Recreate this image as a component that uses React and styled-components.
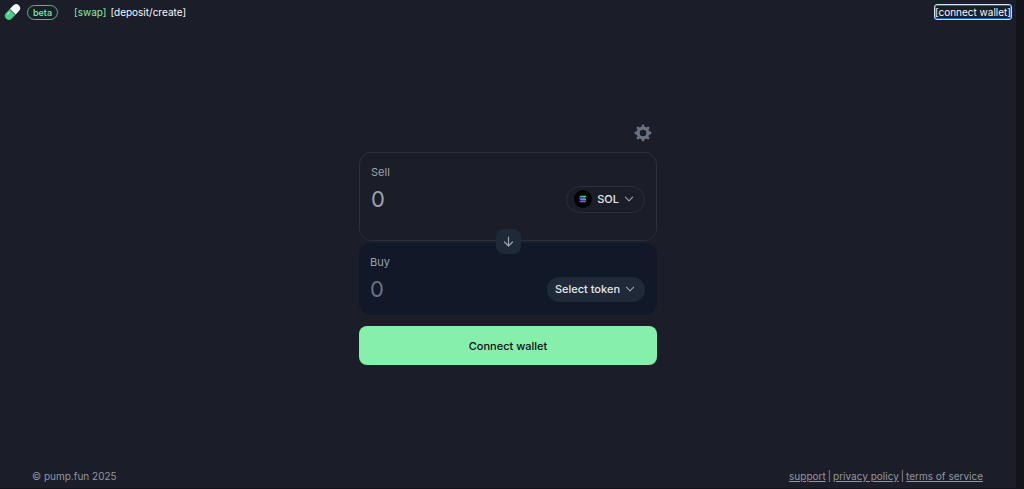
import React from "react";
import styled, { createGlobalStyle } from "styled-components";

const GlobalStyle = createGlobalStyle`
  *, *::before, *::after { box-sizing: border-box; }
  body {
    margin: 0;
    background: #1b1d28;
    color: #fff;
    font-family: Inter, "Liberation Sans", sans-serif;
    font-size: 11px;
    line-height: 16px;
  }
  button, input { font: inherit; color: inherit; }
  button { cursor: pointer; border: 0; padding: 0; background: none; }
`;

const Page = styled.div`
  min-height: 100vh;
  display: flex;
  flex-direction: column;
  border-right: 8px solid #13131a;
  border-bottom: 1px solid #13131a;
`;

const Header = styled.header`
  display: flex;
  align-items: center;
  justify-content: space-between;
  height: 24px;
  padding: 0 4px;
  font-size: 10px;
`;

const Brand = styled.div`
  display: flex;
  align-items: center;
  gap: 6px;
`;

const Badge = styled.span`
  height: 15px;
  padding: 0 5px;
  border: 1px solid #58b883;
  border-radius: 8px;
  color: #86efac;
  font-size: 9px;
  font-weight: 500;
  line-height: 13px;
`;

const Nav = styled.nav`
  display: flex;
  gap: 4px;
  margin-left: 10px;
`;

const NavLink = styled.a`
  color: ${(p) => (p.$active ? "#86efac" : "#f9fafb")};
  text-decoration: none;
`;

const WalletLink = styled.button`
  height: 16px;
  border-radius: 3px;
  line-height: 14px;
  color: #f9fafb;
  border: 1px solid #d5e4f8;
  box-shadow: inset 0 0 0 1px #1268d8;
`;

const Main = styled.main`
  flex: 1;
  display: flex;
  flex-direction: column;
  align-items: center;
  justify-content: center;
`;

const Swap = styled.form`
  display: flex;
  flex-direction: column;
  width: 298px;
  max-width: 100%;
`;

const SettingsButton = styled.button`
  align-self: flex-end;
  width: 18px;
  height: 18px;
  margin: 0 5px 10px;
  color: #6b7280;
  svg { display: block; }
`;

const Panel = styled.section`
  border: 1px solid ${(p) => (p.$filled ? "#111827" : "#2c303c")};
  border-radius: 12px;
  background: ${(p) => (p.$filled ? "#111827" : "transparent")};
  margin-top: ${(p) => (p.$filled ? "2px" : "0")};
  padding: ${(p) => (p.$filled ? "10px 11px 11px 10px" : "11px 11px 27px")};
`;

const Label = styled.label`
  display: block;
  color: #9ca3af;
`;

const AmountRow = styled.div`
  display: flex;
  align-items: center;
  justify-content: space-between;
  height: 28px;
  margin-top: 5px;
`;

const Amount = styled.input`
  flex: 1;
  min-width: 0;
  height: 28px;
  padding: 0;
  border: 0;
  outline: 0;
  background: none;
  font-size: 22px;
  color: #9ca3af;
  &::placeholder { color: ${(p) => (p.$dim ? "#6b7280" : "#9ca3af")}; opacity: 1; }
`;

const TokenButton = styled.button`
  display: flex;
  align-items: center;
  gap: 5px;
  height: ${(p) => (p.$filled ? "25px" : "27px")};
  padding: 0 10px 0 ${(p) => (p.$filled ? "8px" : "7px")};
  border-radius: 14px;
  border: ${(p) => (p.$filled ? "0" : "1px solid #2c303c")};
  background: ${(p) => (p.$filled ? "#1f2937" : "transparent")};
  color: #e5e7eb;
  font-weight: 500;
`;

const SwitchRow = styled.div`
  display: flex;
  justify-content: center;
  align-items: center;
  height: 0;
  position: relative;
`;

const SwitchButton = styled.button`
  flex: none;
  display: grid;
  place-items: center;
  width: 25px;
  height: 25px;
  border-radius: 8px;
  background: #1f2937;
  color: #9ca3af;
`;

const ConnectButton = styled.button`
  height: 39px;
  margin-top: 11px;
  border-radius: 8px;
  background: #86efac;
  color: #0b0f14;
  font-weight: 500;
`;

const Footer = styled.footer`
  display: flex;
  justify-content: space-between;
  padding: 3px 33px 4px 32px;
  font-size: 10px;
  color: #9297a2;
`;

const FooterLinks = styled.nav`
  display: flex;
  gap: 2px;
  a { color: inherit; }
`;

const PillLogo = () => (
  <svg width="17" height="18" viewBox="0 0 17 18" aria-hidden="true">
    <g transform="rotate(43 8.5 9)">
      <path d="M4.500 9V3.800a4 4 0 0 1 8 0V9z" fill="#f5fbf8" />
      <path d="M4.500 9v5.200a4 4 0 0 0 8 0V9z" fill="#4fc987" />
      <path d="M4.500 9h8" stroke="#1d4a38" strokeWidth="0.8" />
      <path d="M6.500 11v3" stroke="#a5f0c6" strokeWidth="1" strokeLinecap="round" />
    </g>
  </svg>
);

const GearIcon = () => (
  <svg width="18" height="18" viewBox="0 0 18 18" fill="none" stroke="currentColor" aria-hidden="true">
    <circle cx="9" cy="9" r="4.9" strokeWidth="3.2" />
    {[0, 45, 90, 135, 180, 225, 270, 315].map((a) => (
      <path key={a} d="M9 3V1.900" strokeWidth="2.800" strokeLinecap="round" transform={`rotate(${a} 9 9)`} />
    ))}
  </svg>
);

const ChevronIcon = () => (
  <svg width="10" height="6" viewBox="0 0 10 6" fill="none" stroke="#9ca3af" strokeWidth="1.1" strokeLinecap="round" strokeLinejoin="round" aria-hidden="true">
    <path d="M1.400 1.200L5 4.800l3.600-3.600" />
  </svg>
);

const DownArrowIcon = () => (
  <svg width="11" height="11" viewBox="0 0 11 11" fill="none" stroke="currentColor" strokeWidth="1.2" strokeLinecap="round" strokeLinejoin="round" aria-hidden="true">
    <path d="M5.500 1v9M1.500 6l4 4 4-4" />
  </svg>
);

const SolanaIcon = () => (
  <svg width="18" height="18" viewBox="0 0 18 18" aria-hidden="true">
    <defs>
      <linearGradient id="sol" gradientUnits="userSpaceOnUse" x1="7" y1="12" x2="11" y2="6">
        <stop offset="0.1" stopColor="#9945ff" />
        <stop offset="0.5" stopColor="#5497d5" />
        <stop offset="0.95" stopColor="#19fb9b" />
      </linearGradient>
    </defs>
    <circle cx="9" cy="9" r="9" fill="#000" />
    <path
      d="M6.300 5.800h6.200l-1.200 1.700H5.100zM5.100 8.200h6.200l1.200 1.700H6.300zM6.300 10.600h6.200l-1.200 1.700H5.100z"
      fill="url(#sol)"
    />
  </svg>
);

export default function App() {
  return (
    <>
      <GlobalStyle />
      <Page>
        <Header>
          <Brand>
            <PillLogo />
            <Badge>beta</Badge>
            <Nav>
              <NavLink href="#swap" $active>[swap]</NavLink>
              <NavLink href="#deposit">[deposit/create]</NavLink>
            </Nav>
          </Brand>
          <WalletLink type="button">[connect wallet]</WalletLink>
        </Header>
        <Main>
          <Swap onSubmit={(e) => e.preventDefault()}>
            <SettingsButton type="button" aria-label="Settings">
              <GearIcon />
            </SettingsButton>
            <Panel>
              <Label htmlFor="sell">Sell</Label>
              <AmountRow>
                <Amount id="sell" placeholder="0" inputMode="decimal" />
                <TokenButton type="button">
                  <SolanaIcon />
                  SOL
                  <ChevronIcon />
                </TokenButton>
              </AmountRow>
            </Panel>
            <SwitchRow>
              <SwitchButton type="button" aria-label="Switch tokens">
                <DownArrowIcon />
              </SwitchButton>
            </SwitchRow>
            <Panel $filled>
              <Label htmlFor="buy">Buy</Label>
              <AmountRow>
                <Amount id="buy" placeholder="0" inputMode="decimal" $dim />
                <TokenButton type="button" $filled>
                  Select token
                  <ChevronIcon />
                </TokenButton>
              </AmountRow>
            </Panel>
            <ConnectButton type="submit">Connect wallet</ConnectButton>
          </Swap>
        </Main>
        <Footer>
          <span>© pump.fun 2025</span>
          <FooterLinks>
            <a href="#support">support</a>
            <span>|</span>
            <a href="#privacy">privacy policy</a>
            <span>|</span>
            <a href="#terms">terms of service</a>
          </FooterLinks>
        </Footer>
      </Page>
    </>
  );
}
